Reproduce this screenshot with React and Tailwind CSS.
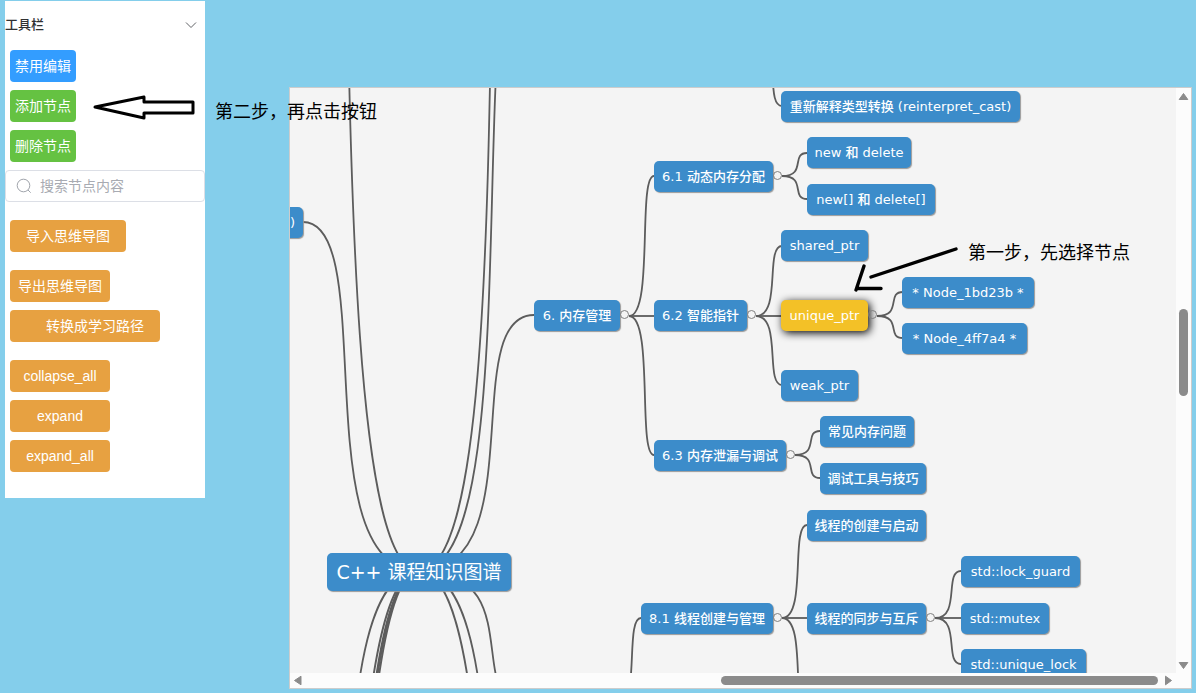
import React from "react";

// Mind map geometry, in pixels from the top left of the canvas.
const NODES = [
  { text: "重新解释类型转换 (reinterpret_cast)", x: 491, y: 3, w: 239 },
  { text: "6. 内存管理", x: 244, y: 212, w: 86, open: true },
  { text: "6.1 动态内存分配", x: 364, y: 73, w: 119, open: true },
  { text: "new 和 delete", x: 517, y: 49, w: 104 },
  { text: "new[] 和 delete[]", x: 517, y: 96, w: 128 },
  { text: "6.2 智能指针", x: 364, y: 212, w: 93, open: true },
  { text: "shared_ptr", x: 491, y: 142, w: 87 },
  { text: "unique_ptr", x: 491, y: 212, w: 87, open: true, selected: true },
  { text: "* Node_1bd23b *", x: 612, y: 189, w: 132 },
  { text: "* Node_4ff7a4 *", x: 612, y: 235, w: 125 },
  { text: "weak_ptr", x: 491, y: 282, w: 77 },
  { text: "6.3 内存泄漏与调试", x: 364, y: 352, w: 132, open: true },
  { text: "常见内存问题", x: 530, y: 328, w: 94 },
  { text: "调试工具与技巧", x: 530, y: 375, w: 106 },
  { text: "8.1 线程创建与管理", x: 351, y: 515, w: 132, open: true },
  { text: "线程的创建与启动", x: 517, y: 422, w: 119 },
  { text: "线程的同步与互斥", x: 517, y: 515, w: 119, open: true },
  { text: "std::lock_guard", x: 671, y: 468, w: 119 },
  { text: "std::mutex", x: 671, y: 515, w: 88 },
  { text: "std::unique_lock", x: 671, y: 561, w: 125 },
];

// [child x, child y, parent x, parent y]
const ROOT_X = 129;
const ROOT_Y = 483;
const LINKS = [
  ...[134, -785, 1053, 1727, 1961, 2062, 2227].map((y) => [13, y, ROOT_X, ROOT_Y]),
  ...[-578, -177, 227, 622, 1043, 1511].map((y) => [244, y, ROOT_X, ROOT_Y]),
  [492, 18, 466, -49],
  [364, 88, 339, 228],
  [364, 228, 339, 228],
  [364, 367, 339, 228],
  [517, 65, 492, 88],
  [517, 111, 492, 88],
  [492, 158, 466, 228],
  [492, 228, 466, 228],
  [492, 297, 466, 228],
  [613, 204, 587, 228],
  [613, 250, 587, 228],
  [530, 343, 505, 367],
  [530, 390, 505, 367],
  [351, 530, 326, 622],
  [517, 437, 492, 530],
  [517, 530, 492, 530],
  [517, 623, 492, 530],
  [671, 483, 645, 530],
  [671, 530, 645, 530],
  [671, 576, 645, 530],
];

function linkPath([x1, y1, x2, y2]) {
  return `M${x1} ${y1}C${x1 + ((x2 - x1) * 2) / 3} ${y1} ${x1} ${y2} ${x2} ${y2}`;
}

const NODE_BASE =
  "absolute flex h-[31px] items-center justify-center whitespace-nowrap rounded-[5px] text-[13px] leading-4 font-medium text-white";

function MindNode({ node }) {
  return (
    <>
      <div
        className={
          NODE_BASE +
          (node.selected
            ? " bg-[#f3c127] shadow-[2px_2px_8px_#000]"
            : " bg-[#3c8cca] shadow-[1px_1px_1px_#999]")
        }
        style={{ left: node.x, top: node.y, width: node.w }}
      >
        {node.text}
      </div>
      {node.open && (
        <button
          type="button"
          aria-label={"折叠 " + node.text}
          className="absolute size-[9px] rounded-full border border-[#808080]"
          style={{ left: node.x + node.w, top: node.y + 10 }}
        />
      )}
    </>
  );
}

function MindMap() {
  return (
    <div className="relative min-w-0 flex-1 overflow-hidden bg-[#f4f4f4] font-['DejaVu_Sans','Noto_Sans_CJK_SC',sans-serif]">
      <svg className="absolute inset-0 size-full" fill="none" stroke="#5c5c5c" strokeWidth="1.8" aria-hidden="true">
        {LINKS.map((link) => (
          <path key={link.join()} d={linkPath(link)} />
        ))}
      </svg>
      <div className="absolute top-[119px] left-[-107px] flex h-[31px] w-[120px] items-center justify-end rounded-[5px] bg-[#3c8cca] pr-2 text-[13px] text-white shadow-[1px_1px_1px_#999]">
        )
      </div>
      <div className="absolute top-[465px] left-[37px] flex h-[38px] w-[184px] items-center justify-center whitespace-nowrap rounded-[5px] bg-[#3c8cca] text-[19px] text-white shadow-[1px_1px_1px_#999]">
        C++ 课程知识图谱
      </div>
      {NODES.map((node) => (
        <MindNode key={node.text} node={node} />
      ))}
    </div>
  );
}

function ScrollArrow({ d }) {
  return (
    <svg className="size-[15px] shrink-0" viewBox="0 0 15 15" fill="#8b8b8b" stroke="#8b8b8b" strokeLinejoin="round" aria-hidden="true">
      <path d={d} />
    </svg>
  );
}

const SIDE_BTN =
  "h-8 rounded text-sm text-white";

export default function App() {
  return (
    <div className="relative flex min-h-screen items-start overflow-hidden bg-[#84ceeb] pl-[5px] font-['Liberation_Sans','Noto_Sans_CJK_SC',sans-serif]">
      <aside className="mt-px w-[200px] shrink-0 bg-white pb-[26px]">
        <button
          type="button"
          aria-expanded="true"
          className="flex h-12 w-full items-center justify-between pr-2 text-[13px] font-medium text-[#303133]"
        >
          工具栏
          <svg className="size-3" viewBox="0 0 12 12" fill="none" stroke="#606266" aria-hidden="true">
            <path d="M1 3.5l5 5 5-5" />
          </svg>
        </button>
        <div className="flex flex-col items-start gap-2 pt-px pl-[5px]">
          <button type="button" className={SIDE_BTN + " w-[66px] bg-[#339dff]"}>禁用编辑</button>
          <button type="button" className={SIDE_BTN + " w-[66px] bg-[#65c242]"}>添加节点</button>
          <button type="button" className={SIDE_BTN + " w-[66px] bg-[#65c242]"}>删除节点</button>
        </div>
        <label className="mt-2 flex h-8 items-center rounded border border-[#dcdfe6] px-[10px]">
          <svg className="size-4 shrink-0" viewBox="0 0 16 16" fill="none" stroke="#a0a4ab" aria-hidden="true">
            <circle cx="7.5" cy="7.5" r="6.3" />
            <path d="M12 12l2.7 2.7" />
          </svg>
          <input
            type="text"
            aria-label="搜索节点内容"
            placeholder="搜索节点内容"
            className="ml-2 min-w-0 flex-1 text-sm text-[#606266] outline-none placeholder:text-[#a8abb2]"
          />
        </label>
        <div className="mt-[18px] flex flex-col items-start pl-[5px]">
          <button type="button" className={SIDE_BTN + " w-[116px] bg-[#e7a141]"}>导入思维导图</button>
          <button type="button" className={SIDE_BTN + " mt-[18px] w-[100px] bg-[#e7a141]"}>导出思维导图</button>
          <button type="button" className={SIDE_BTN + " mt-2 w-[150px] bg-[#e7a141] pl-5"}>转换成学习路径</button>
          <button type="button" className={SIDE_BTN + " mt-[18px] w-[100px] bg-[#e7a141]"}>collapse_all</button>
          <button type="button" className={SIDE_BTN + " mt-2 w-[100px] bg-[#e7a141]"}>expand</button>
          <button type="button" className={SIDE_BTN + " mt-2 w-[100px] bg-[#e7a141]"}>expand_all</button>
        </div>
      </aside>

      <main className="mt-[87px] mr-1 ml-[84px] flex h-[calc(100vh-91px)] min-w-0 flex-1 flex-col border border-[#ccc]">
        <div className="flex min-h-0 flex-1">
          <MindMap />
          <div className="flex w-[15px] shrink-0 flex-col items-center bg-[#fcfcfc]">
            <ScrollArrow d="M7.5 5.5l4.3 6h-8.6z" />
            <div className="grow-[206]" />
            <div className="w-[9px] grow-[87] rounded-full bg-[#8b8b8b]" />
            <div className="grow-[262]" />
            <ScrollArrow d="M7.5 10.5l4.3-6h-8.6z" />
          </div>
        </div>
        <div className="flex h-[15px] shrink-0 items-center bg-[#fcfcfc] pr-[15px]">
          <ScrollArrow d="M4.5 7.5l6.5-4.3v8.6z" />
          <div className="grow-[416]" />
          <div className="h-[9px] grow-[437] rounded-full bg-[#8b8b8b]" />
          <div className="grow-[3]" />
          <ScrollArrow d="M10.5 7.5l-6-4.3v8.6z" />
        </div>
      </main>

      <svg className="pointer-events-none absolute inset-0 size-full" fill="none" stroke="#000" strokeWidth="3" aria-hidden="true">
        <path d="M95 107L144 97V102H193V113H144V118Z" fill="#fff" strokeLinejoin="round" />
        <path d="M956 249L871 277M864 266L856 290M857 288.5H881" strokeWidth="3.4" strokeLinecap="round" />
      </svg>
      <p className="pointer-events-none absolute top-[98px] left-[215px] text-[18px] leading-7 text-black">
        第二步，再点击按钮
      </p>
      <p className="pointer-events-none absolute top-[239px] left-[968px] text-[18px] leading-7 text-black">
        第一步，先选择节点
      </p>
    </div>
  );
}
